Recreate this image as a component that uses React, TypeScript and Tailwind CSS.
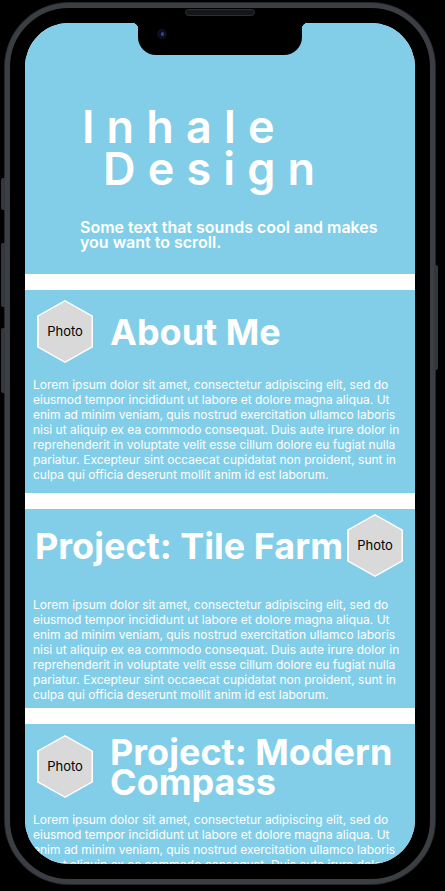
import React from 'react';

const lorem =
  'Lorem ipsum dolor sit amet, consectetur adipiscing elit, sed do eiusmod tempor incididunt ut labore et dolore magna aliqua. Ut enim ad minim veniam, quis nostrud exercitation ullamco laboris nisi ut aliquip ex ea commodo consequat. Duis aute irure dolor in reprehenderit in voluptate velit esse cillum dolore eu fugiat nulla pariatur. Excepteur sint occaecat cupidatat non proident, sunt in culpa qui officia deserunt mollit anim id est laborum.';

const Hexagon = () => (
  <div className="h-[63px] w-[56px] shrink-0 bg-white p-[1.5px] [clip-path:polygon(50%_0,100%_25%,100%_75%,50%_100%,0_75%,0_25%)]">
    <div className="flex h-full w-full items-center justify-center bg-[#d9d9d9] text-[13px] text-black [clip-path:polygon(50%_0,100%_25%,100%_75%,50%_100%,0_75%,0_25%)]">
      Photo
    </div>
  </div>
);

const Body = () => <p className="px-2 text-[12px] leading-[15px] text-white">{lorem}</p>;

const Notch = () => (
  <div className="absolute left-1/2 top-0 flex -translate-x-1/2">
    <div className="h-[6px] w-[6px] bg-[radial-gradient(circle_at_0_100%,transparent_6px,black_6.5px)]" />
    <div className="relative h-[32px] w-[164px] rounded-b-[18px] bg-black">
      <div className="absolute left-[19px] top-[6px] flex h-[10px] w-[10px] items-center justify-center rounded-full bg-[#0c0f1e]">
        <div className="h-[4px] w-[3px] rounded-full bg-[#2f44a0]" />
      </div>
    </div>
    <div className="h-[6px] w-[6px] bg-[radial-gradient(circle_at_100%_100%,transparent_6px,black_6.5px)]" />
  </div>
);

export default function App() {
  return (
    <div className="h-[891px] w-[445px] overflow-hidden bg-black font-['Inter',sans-serif]">
      <div className="relative ml-[5px] mt-[3px] h-[881px] w-[430px] rounded-[64px] border-[5px] border-[#3b3f43] bg-black p-[15px] shadow-[0_0_0_1px_#24272a]">
        {/* side buttons */}
        <div className="absolute left-[-9px] top-[170px] h-[32px] w-[4px] rounded-l-[2px] bg-[#34383c]" />
        <div className="absolute left-[-9px] top-[235px] h-[64px] w-[4px] rounded-l-[2px] bg-[#34383c]" />
        <div className="absolute left-[-9px] top-[320px] h-[65px] w-[4px] rounded-l-[2px] bg-[#34383c]" />
        <div className="absolute right-[-8px] top-[257px] h-[105px] w-[4px] rounded-r-[2px] bg-[#34383c]" />
        {/* speaker */}
        <div className="absolute left-1/2 top-[1px] h-[7px] w-[70px] -translate-x-1/2 rounded-full border border-[#2c2f33] bg-[#141618]" />

        <div className="relative h-full w-full overflow-hidden rounded-[44px] bg-white">
          <div className="flex flex-col gap-4">
            <section className="h-[251px] bg-[#82cee8] pt-[83px]">
              <h1 className="pl-[57px] text-[45px] font-semibold leading-[42px] tracking-[0.27em] text-white">
                Inhale
                <br />
                <span className="pl-[21px]">Design</span>
              </h1>
              <p className="mt-[30px] max-w-[365px] pl-[55px] text-[16px] font-semibold leading-[15px] text-white">
                Some text that sounds cool and makes you want to scroll.
              </p>
            </section>

            <section className="h-[203px] bg-[#82cee8] pt-[10px]">
              <div className="flex items-center gap-[17px] pl-3">
                <Hexagon />
                <h2 className="text-[36px] font-bold leading-[36px] text-white">About Me</h2>
              </div>
              <div className="mt-[14px]">
                <Body />
              </div>
            </section>

            <section className="h-[199px] bg-[#82cee8] pt-[5px]">
              <div className="flex items-center justify-between pl-[10px] pr-3">
                <h2 className="text-[36px] font-bold leading-[36px] text-white">Project: Tile Farm</h2>
                <Hexagon />
              </div>
              <div className="mt-[20px]">
                <Body />
              </div>
            </section>

            <section className="bg-[#82cee8] pb-10 pt-[11px]">
              <div className="flex items-center gap-[17px] pl-3">
                <Hexagon />
                <h2 className="text-[36px] font-bold leading-[30px] text-white">Project: Modern Compass</h2>
              </div>
              <div className="mt-[14px]">
                <Body />
              </div>
            </section>
          </div>
          <Notch />
        </div>
      </div>
    </div>
  );
}
